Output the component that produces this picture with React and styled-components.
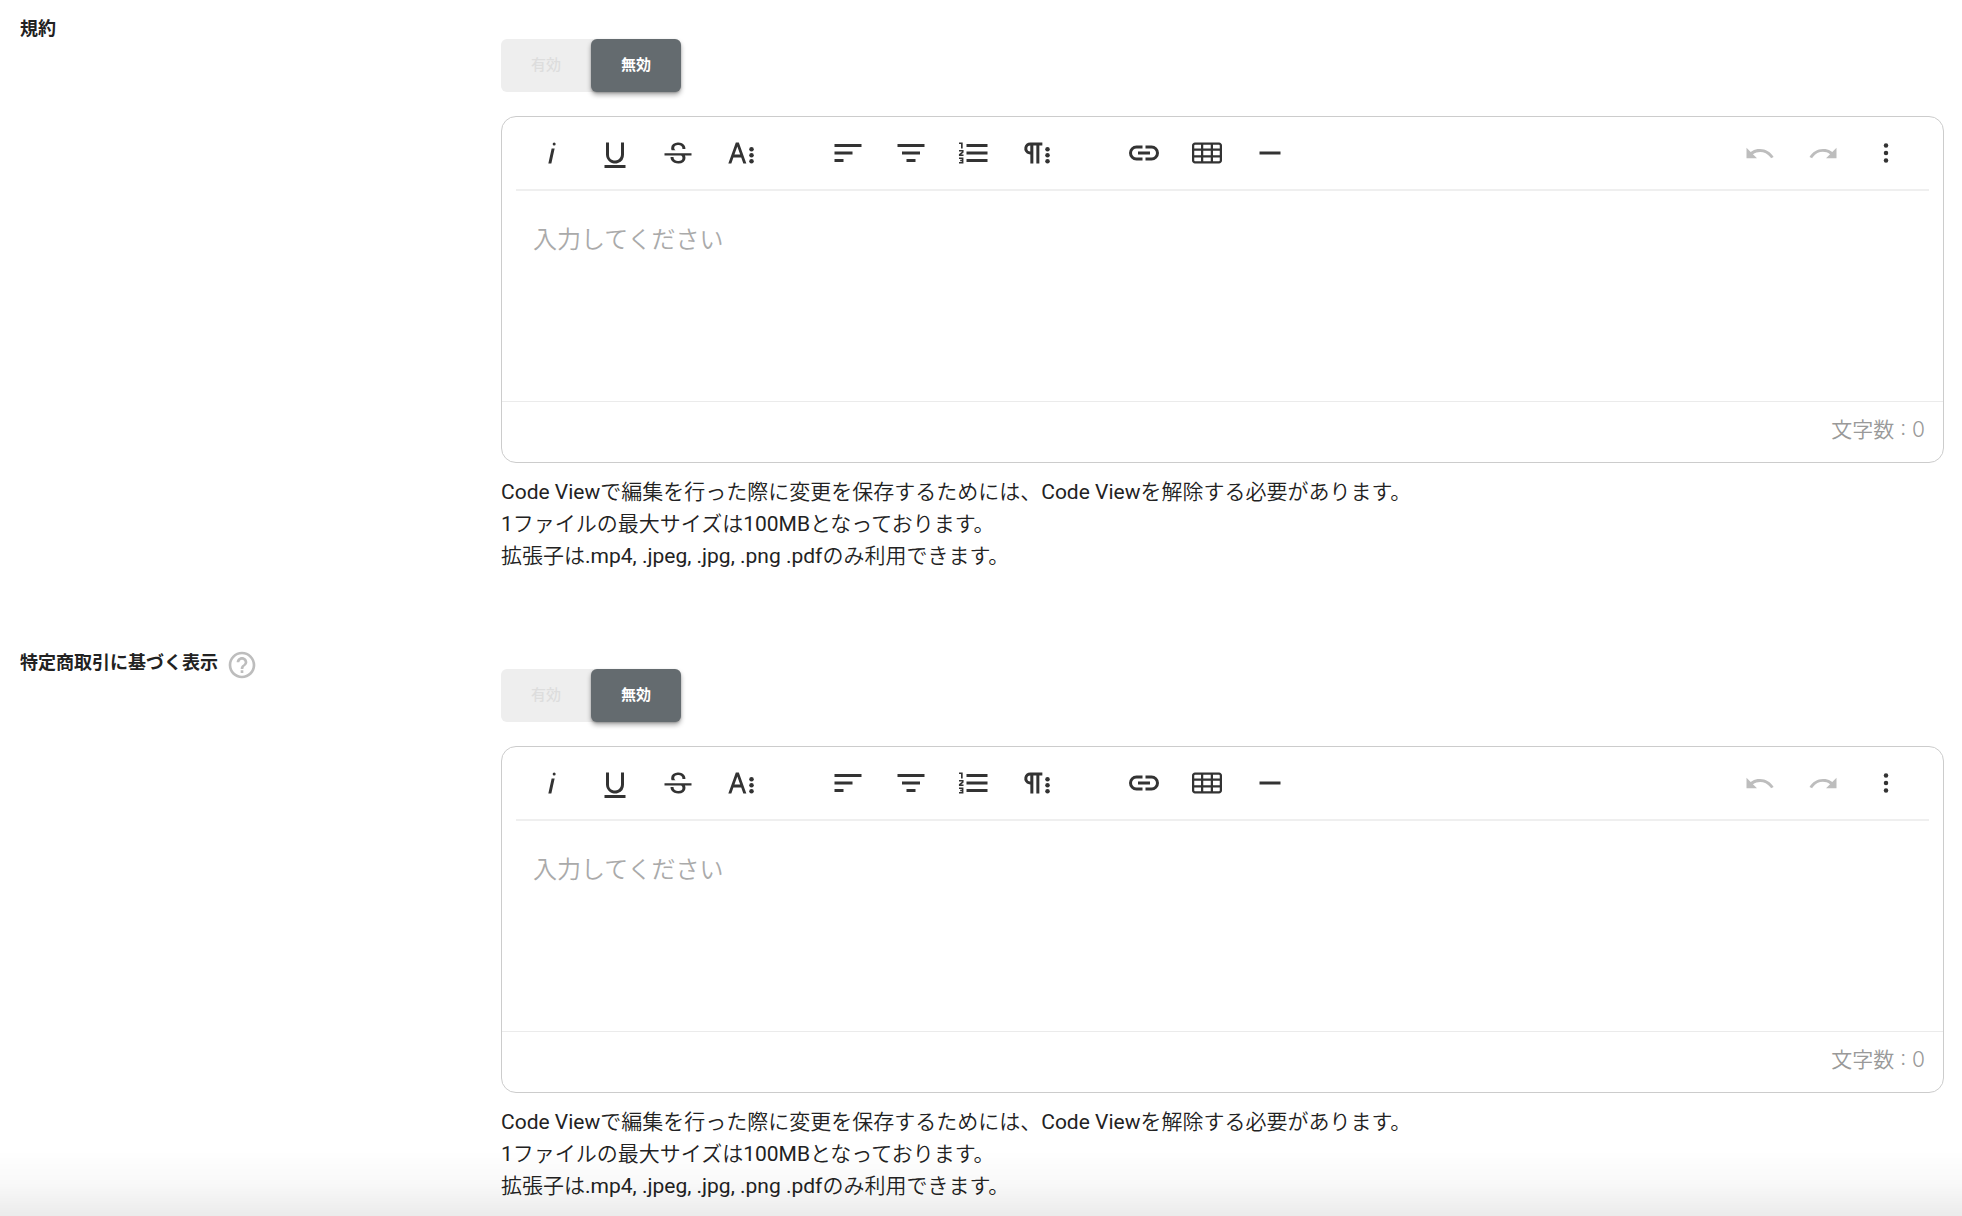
import React, { useId, useState } from "react";
import styled, { createGlobalStyle } from "styled-components";

const GlobalStyle = createGlobalStyle`
  *, *::before, *::after { box-sizing: border-box; }
  body {
    margin: 0;
    background: #fff;
    color: #222;
    font-family: Roboto, "Noto Sans CJK JP", sans-serif;
    font-size: 21px;
  }
  button, textarea { font-family: inherit; }
`;

const Page = styled.main`
  display: flex;
  flex-direction: column;
  gap: 58px;
  padding: 0 18px 0 20px;
`;

const Section = styled.section`
  display: grid;
  grid-template-columns: 25% 1fr;
`;

const LabelCell = styled.div`
  display: flex;
  align-items: center;
  align-self: start;
  gap: 8px;
  padding-top: 15px;
`;

const Label = styled.label`
  font-size: 18px;
  font-weight: 700;
  line-height: 28px;
`;

const HelpButton = styled.button`
  display: flex;
  padding: 4px 0 0;
  border: 0;
  background: none;
  color: #bdbdbd;
  cursor: pointer;

  svg { width: 32px; height: 32px; fill: currentColor; }
`;

const Field = styled.div`
  min-width: 0;
  padding-top: 39px;
`;

const Toggle = styled.div`
  display: inline-flex;
  vertical-align: top;
  border-radius: 6px;
  background: #eee;
`;

const ToggleButton = styled.button`
  width: 90px;
  height: 53px;
  padding: 0 0 5px;
  border: 0;
  border-radius: 6px;
  font-size: 15px;
  font-weight: ${(p) => (p.$active ? 700 : 500)};
  color: ${(p) => (p.$active ? "#fff" : "#ddd")};
  background: ${(p) => (p.$active ? "#646b6f" : "transparent")};
  box-shadow: ${(p) =>
    p.$active ? "0 3px 5px rgba(0, 0, 0, 0.32), 0 1px 2px rgba(0, 0, 0, 0.2)" : "none"};
  cursor: pointer;
`;

const Editor = styled.div`
  display: flex;
  flex-direction: column;
  margin-top: 24px;
  border: 1px solid #ccc;
  border-radius: 15px;
  background: #fff;
`;

const Toolbar = styled.div`
  display: flex;
  gap: 44px;
  height: 74px;
  margin: 0 14px;
  padding: 0 12px 0 4px;
  border-bottom: 2px solid #efefef;
`;

const ToolGroup = styled.div`
  display: flex;
  align-items: center;
  margin-left: ${(p) => (p.$end ? "auto" : "0")};
`;

const ToolButton = styled.button`
  display: flex;
  align-items: center;
  justify-content: center;
  width: 63px;
  height: 60px;
  padding: 0;
  border: 0;
  background: none;
  color: ${(p) => (p.disabled ? "#bdbdbd" : "#333")};
  cursor: pointer;

  svg { width: 36px; height: 36px; fill: currentColor; }
`;

const TextArea = styled.textarea`
  display: block;
  width: 100%;
  height: 210px;
  padding: 31px 31px 0;
  border: 0;
  outline: none;
  resize: none;
  background: transparent;
  color: #222;
  font-size: 24px;
  font-weight: 350;
  line-height: 36px;

  &::placeholder { color: #aaa; opacity: 1; }
`;

const CountBar = styled.div`
  display: flex;
  justify-content: flex-end;
  padding: 12px 18px 16px 0;
  border-top: 1px solid #ebebeb;
  color: #999;
  font-family: Inter, "Noto Sans CJK JP", sans-serif;
  font-size: 21px;
  font-weight: 350;
  line-height: 32px;
`;

const Notes = styled.div`
  margin-top: 13px;
  font-family: Roboto, "Noto Sans CJK JP DemiLight", "Noto Sans CJK JP", sans-serif;
  line-height: 32px;

  p { margin: 0; }
`;

const BottomFade = styled.div`
  position: fixed;
  right: 0;
  bottom: 0;
  left: 0;
  height: 66px;
  pointer-events: none;
  background: linear-gradient(
    to bottom,
    rgba(0, 0, 0, 0),
    rgba(0, 0, 0, 0.025) 50%,
    rgba(0, 0, 0, 0.08)
  );
`;

const ICONS = {
  italic: (
    <path d="M11.76,9h2l-2.2,10h-2Zm1.68-4a1,1,0,1,0,1,1,1,1,0,0,0-1-1Z" />
  ),
  underline: (
    <path d="M19,20v2H5V20Zm-3-6.785a4,4,0,0,1-5.74,3.4A3.75,3.75,0,0,1,8,13.085V5.005H6v8.21a6,6,0,0,0,8,5.44,5.851,5.851,0,0,0,4-5.65v-8H16Z" />
  ),
  strike: (
    <path d="M3,12.20294H21v1.5H16.63422a3.59782,3.59782,0,0,1,.34942,1.5929,3.252,3.252,0,0,1-1.31427,2.6997A5.55082,5.55082,0,0,1,12.20251,19a6.4421,6.4421,0,0,1-2.62335-.539,4.46335,4.46335,0,0,1-1.89264-1.48816,3.668,3.668,0,0,1-.67016-2.15546V14.704H9.02v.11334a2.18275,2.18275,0,0,0,.85413,1.83069,3.69,3.69,0,0,0,2.32836.67926,3.38778,3.38778,0,0,0,2.07666-.5462,1.73346,1.73346,0,0,0,.7013-1.46655,1.69749,1.69749,0,0,0-.647-1.43439,3.00525,3.00525,0,0,0-.27491-.17725H3ZM16.34473,7.05981A4.18163,4.18163,0,0,0,14.6236,5.5462,5.627,5.627,0,0,0,12.11072,5,5.16083,5.16083,0,0,0,8.74719,6.06213,3.36315,3.36315,0,0,0,7.44006,8.76855a3.22923,3.22923,0,0,0,.3216,1.42786h2.59668c-.08338-.05365-.18537-.10577-.25269-.16064a1.60652,1.60652,0,0,1-.65283-1.30036,1.79843,1.79843,0,0,1,.68842-1.5108,3.12971,3.12971,0,0,1,1.96948-.55243,3.04779,3.04779,0,0,1,2.106.6687,2.35066,2.35066,0,0,1,.736,1.83258v.11341h2.00317V9.17346A3.90013,3.90013,0,0,0,16.34473,7.05981Z" />
  ),
  textMore: (
    <>
      <path d="M13.55,19h2l-5-14h-2l-5,14h2l1.4-4h5.2ZM7.65,13,9.55,7.7,11.45,13Z" />
      <circle cx="19" cy="9.5" r="1.5" />
      <circle cx="19" cy="13.5" r="1.5" />
      <circle cx="19" cy="17.5" r="1.5" />
    </>
  ),
  alignLeft: <path d="M3,6h18v2H3Z M3,11h12v2H3Z M3,16h6v2H3Z" />,
  alignCenter: <path d="M3,6h18v2H3Z M6,11h12v2H6Z M9,16h6v2H9Z" />,
  orderedList: (
    <>
      <path d="M7,6h14v2H7Z M7,11h14v2H7Z M7,16h14v2H7Z" />
      <path
        fill="none"
        stroke="currentColor"
        strokeWidth="1.1"
        d="M2,5.5H3.9V9 M2,10.5H4.5V11.4L2.5,13.1V13.5H5 M2,15.5H4.4V18.5H2 M2.8,17H4.4"
      />
    </>
  ),
  paragraphMore: (
    <>
      <path d="M7.682,5a4.11,4.11,0,0,0-4.07,3.18,4,4,0,0,0,3.11,4.725l.027.005a3.766,3.766,0,0,0,.82.09v6h2V7h2V19h2V7h2V5ZM5.532,9a2,2,0,0,1,2-2v4A2,2,0,0,1,5.532,9Z" />
      <circle cx="19" cy="9.5" r="1.5" />
      <circle cx="19" cy="13.5" r="1.5" />
      <circle cx="19" cy="17.5" r="1.5" />
    </>
  ),
  link: (
    <path d="M11,17H7A5,5,0,0,1,7,7h4V9H7a3,3,0,0,0,0,6h4ZM17,7H13V9h4a3,3,0,0,1,0,6H13v2h4A5,5,0,0,0,17,7Zm-1,4H8v2h8Z" />
  ),
  table: (
    <path d="M20,5H4C2.9,5,2,5.9,2,7v10c0,1.1,0.9,2,2,2h16c1.1,0,2-0.9,2-2V7C22,5.9,21.1,5,20,5z M9.5,13.5v-3h5v3H9.5z M14.5,15v2.5h-5V15H14.5z M9.5,9V6.5h5V9H9.5z M3.5,7c0-0.3,0.2-0.5,0.5-0.5h4V9H3.5V7z M3.5,10.5H8v3H3.5V10.5z M3.5,17v-2H8v2.5H4C3.7,17.5,3.5,17.3,3.5,17z M20.5,17c0,0.3-0.2,0.5-0.5,0.5h-4V15h4.5V17z M20.5,13.5H16v-3h4.5V13.5z M16,9V6.5h4c0.3,0,0.5,0.2,0.5,0.5v2H16z" />
  ),
  rule: <path d="M5,11h14v2H5Z" />,
  undo: (
    <path d="M10.4,9.4c-1.7,0.3-3.2,0.9-4.6,2L3,8.5v7h7l-2.7-2.7c3.7-2.6,8.8-1.8,11.5,1.9c0.2,0.3,0.4,0.5,0.5,0.8l1.8-0.9C18.9,10.8,14.7,8.7,10.4,9.4z" />
  ),
  redo: (
    <path d="M13.6,9.4c1.7,0.3,3.2,0.9,4.6,2L21,8.5v7h-7l2.7-2.7C13,10.1,7.9,11,5.3,14.7c-0.2,0.3-0.4,0.5-0.5,0.8L3,14.6C5.1,10.8,9.3,8.7,13.6,9.4z" />
  ),
  more: (
    <>
      <circle cx="12" cy="7" r="1.5" />
      <circle cx="12" cy="12" r="1.5" />
      <circle cx="12" cy="17" r="1.5" />
    </>
  ),
};

const TOOL_GROUPS = [
  [
    { icon: "italic", name: "斜体" },
    { icon: "underline", name: "下線" },
    { icon: "strike", name: "取り消し線" },
    { icon: "textMore", name: "その他の文字書式" },
  ],
  [
    { icon: "alignLeft", name: "左揃え" },
    { icon: "alignCenter", name: "中央揃え" },
    { icon: "orderedList", name: "番号付きリスト" },
    { icon: "paragraphMore", name: "その他の段落書式" },
  ],
  [
    { icon: "link", name: "リンクの挿入" },
    { icon: "table", name: "表の挿入" },
    { icon: "rule", name: "水平線の挿入" },
  ],
];

const HISTORY_TOOLS = [
  { icon: "undo", name: "元に戻す", disabled: true },
  { icon: "redo", name: "やり直す", disabled: true },
  { icon: "more", name: "その他" },
];

function Tools({ items, end }) {
  return (
    <ToolGroup $end={end}>
      {items.map(({ icon, name, disabled }) => (
        <ToolButton key={icon} type="button" aria-label={name} disabled={disabled}>
          <svg viewBox="0 0 24 24" aria-hidden="true">{ICONS[icon]}</svg>
        </ToolButton>
      ))}
    </ToolGroup>
  );
}

function EditorSection({ label, help }) {
  const id = useId();
  const [enabled, setEnabled] = useState(false);
  const [text, setText] = useState("");

  return (
    <Section>
      <LabelCell>
        <Label htmlFor={id}>{label}</Label>
        {help && (
          <HelpButton type="button" aria-label="ヘルプ">
            <svg viewBox="0 0 24 24" aria-hidden="true">
              <path d="M11 18h2v-2h-2v2zm1-16C6.48 2 2 6.48 2 12s4.48 10 10 10 10-4.48 10-10S17.52 2 12 2zm0 18c-4.41 0-8-3.59-8-8s3.59-8 8-8 8 3.59 8 8-3.59 8-8 8zm0-14c-2.21 0-4 1.79-4 4h2c0-1.1.9-2 2-2s2 .9 2 2c0 2-3 1.75-3 5h2c0-2.25 3-2.5 3-5 0-2.21-1.79-4-4-4z" />
            </svg>
          </HelpButton>
        )}
      </LabelCell>
      <Field>
        <Toggle role="group" aria-label={label}>
          <ToggleButton
            type="button"
            $active={enabled}
            aria-pressed={enabled}
            onClick={() => setEnabled(true)}
          >
            有効
          </ToggleButton>
          <ToggleButton
            type="button"
            $active={!enabled}
            aria-pressed={!enabled}
            onClick={() => setEnabled(false)}
          >
            無効
          </ToggleButton>
        </Toggle>
        <Editor>
          <Toolbar role="toolbar">
            {TOOL_GROUPS.map((items) => (
              <Tools key={items[0].icon} items={items} />
            ))}
            <Tools items={HISTORY_TOOLS} end />
          </Toolbar>
          <TextArea
            id={id}
            placeholder="入力してください"
            value={text}
            onChange={(e) => setText(e.target.value)}
          />
          <CountBar>文字数 : {text.length}</CountBar>
        </Editor>
        <Notes>
          <p>Code Viewで編集を行った際に変更を保存するためには、Code Viewを解除する必要があります。</p>
          <p>1ファイルの最大サイズは100MBとなっております。</p>
          <p>拡張子は.mp4, .jpeg, .jpg, .png .pdfのみ利用できます。</p>
        </Notes>
      </Field>
    </Section>
  );
}

export default function App() {
  return (
    <>
      <GlobalStyle />
      <Page>
        <EditorSection label="規約" />
        <EditorSection label="特定商取引に基づく表示" help />
      </Page>
      <BottomFade />
    </>
  );
}
